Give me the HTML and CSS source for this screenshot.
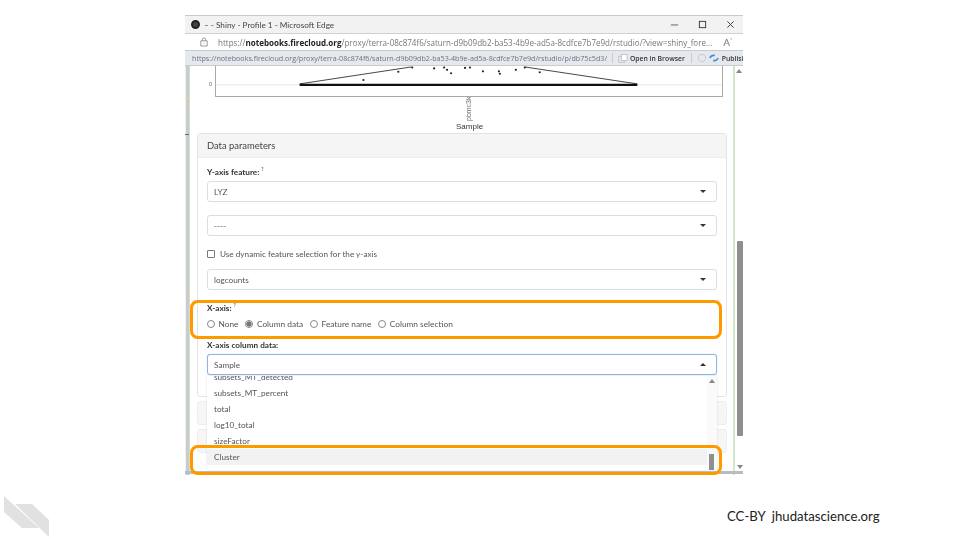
FILE: index.html
```html
<!DOCTYPE html>
<html lang="en">
<head>
<meta charset="utf-8">
<title>Shiny</title>
<link rel="stylesheet" href="styles.css">
</head>
<body>
<main class="slide">
  <section class="window">
    <div class="window-blur">
      <header class="titlebar">
        <span class="favicon"></span>
        <span class="title">– - Shiny - Profile 1 - Microsoft Edge</span>
        <span class="controls">
          <svg class="ctl" viewBox="0 0 10 10"><path d="M1 5.5H9" stroke="#555" stroke-width="1"/></svg>
          <svg class="ctl" viewBox="0 0 10 10"><rect x="1.5" y="1.5" width="7" height="7" fill="none" stroke="#333" stroke-width="1"/></svg>
          <svg class="ctl" viewBox="0 0 10 10"><path d="M1.5 1.5L8.5 8.5M8.5 1.5L1.5 8.5" stroke="#333" stroke-width="1"/></svg>
        </span>
      </header>
      <div class="addressbar">
        <svg class="lock" viewBox="0 0 10 12"><path d="M1 4.5H9V11H1ZM3 4.5V2.5Q3 1 5 1T7 2.5V4.5M5 7V8" fill="none" stroke="#777" stroke-width="0.9"/></svg>
        <span class="url">https://<b>notebooks.firecloud.org</b>/proxy/terra-08c874f6/saturn-d9b09db2-ba53-4b9e-ad5a-8cdfce7b7e9d/rstudio/?view=shiny_fore...</span>
        <span class="read">A<sup>ᐠ</sup></span>
      </div>
      <div class="toolbar">
        <span class="toolbar-url">https://notebooks.firecloud.org/proxy/terra-08c874f6/saturn-d9b09db2-ba53-4b9e-ad5a-8cdfce7b7e9d/rstudio/p/db75c5d3/</span>
        <span class="sep"></span>
        <svg class="tool-icon" viewBox="0 0 12 12"><rect x="1" y="4" width="7" height="7" fill="#eee" stroke="#bbb"/><rect x="4" y="2" width="7" height="7" fill="#fff" stroke="#bbb"/></svg>
        <span class="tool-text">Open in Browser</span>
        <span class="sep"></span>
        <svg class="tool-icon" viewBox="0 0 12 12"><circle cx="6" cy="6" r="4.5" fill="none" stroke="#ccc" stroke-width="1.2"/></svg>
        <svg class="tool-icon" viewBox="0 0 12 12"><path d="M1 6Q3 2 7 3M11 6Q9 10 5 9" fill="none" stroke="#3d8ed0" stroke-width="2"/></svg>
        <span class="tool-text publish">Publish</span>
      </div>
      <div class="content">
        <div class="gutter-left"><i class="tick-yellow"></i><i class="tick-blue"></i></div>
        <div class="page">
          <div class="plot">
            <div class="plot-frame">
              <span class="tick">0</span>
              <svg class="plot-svg" viewBox="0 0 508 31" preserveAspectRatio="none">
                <path d="M0 19.5H508" stroke="#e6e6e6" stroke-width="1"/>
                <path d="M84 18.5L196 1" fill="none" stroke="#444" stroke-width="1"/>
                <path d="M310 1L423 18.5" fill="none" stroke="#444" stroke-width="1"/>
                <path d="M84 19.5H423" stroke="#111" stroke-width="2.5"/>
                <g fill="#222">
                  <circle cx="148" cy="14.500" r="1.100"/><circle cx="183" cy="6" r="1.100"/><circle cx="197" cy="1.500" r="1.100"/>
                  <circle cx="219" cy="2.500" r="1.100"/><circle cx="229" cy="1.500" r="1.100"/><circle cx="232" cy="4" r="1.100"/>
                  <circle cx="236" cy="7.500" r="1.100"/><circle cx="250" cy="2" r="1.100"/><circle cx="255" cy="1.500" r="1.100"/>
                  <circle cx="268" cy="5.500" r="1.100"/><circle cx="285" cy="8" r="1.100"/><circle cx="284" cy="5.500" r="1.100"/>
                  <circle cx="301" cy="4" r="1.100"/><circle cx="310" cy="1.500" r="1.100"/><circle cx="325" cy="6.500" r="1.100"/>
                </g>
              </svg>
            </div>
            <span class="plot-cat">pbmc3k</span>
            <span class="plot-axis">Sample</span>
          </div>
          <div class="card">
            <h3 class="card-head">Data parameters</h3>
            <div class="card-body">
              <label class="field-label first">Y-axis feature: <sup>?</sup></label>
              <div class="select"><span>LYZ</span><i class="caret"></i></div>
              <div class="select gap-a"><span>----</span><i class="caret"></i></div>
              <div class="check-row"><span class="checkbox"></span><span>Use dynamic feature selection for the y-axis</span></div>
              <div class="select"><span>logcounts</span><i class="caret"></i></div>
              <label class="field-label xaxis">X-axis: <sup>?</sup></label>
              <div class="radio-row">
                <span class="radio-item"><span class="radio"></span>None</span>
                <span class="radio-item"><span class="radio on"></span>Column data</span>
                <span class="radio-item"><span class="radio"></span>Feature name</span>
                <span class="radio-item"><span class="radio"></span>Column selection</span>
              </div>
              <label class="field-label xcol">X-axis column data:</label>
              <div class="select focus"><span>Sample</span><i class="caret up"></i></div>
            </div>
          </div>
          <div class="collapsed"></div>
          <div class="collapsed"></div>
          <div class="dropdown">
            <ul class="options">
              <li class="opt clipped">subsets_MT_detected</li>
              <li class="opt">subsets_MT_percent</li>
              <li class="opt">total</li>
              <li class="opt">log10_total</li>
              <li class="opt">sizeFactor</li>
              <li class="opt active">Cluster</li>
              <li class="opt">label_cluster</li>
            </ul>
            <div class="drop-scroll"><i class="arrow-up"></i><i class="drop-thumb"></i></div>
          </div>
        </div>
        <div class="gutter-right"></div>
        <div class="scrollbar"><i class="arrow-up"></i><i class="thumb"></i><i class="arrow-down"></i></div>
      </div>
      <div class="bottom-edge"></div>
    </div>
  </section>
  <div class="mark mark-a"></div>
  <div class="mark mark-b"></div>
  <svg class="logo" viewBox="0 0 50 42" aria-hidden="true">
    <path d="M0 0L35 32H18L0 16Z" fill="#e1e1e1"/>
    <path d="M11 8H28L45 24V41Z" fill="#e1e1e1"/>
  </svg>
  <footer class="credit"><span>CC-BY</span><span>jhudatascience.org</span></footer>
</main>
</body>
</html>
```
FILE: styles.css
```css
* { box-sizing: border-box; }
html, body { margin: 0; padding: 0; background: #fff; }
.slide { position: relative; width: 960px; height: 540px; overflow: hidden; background: #fff; font-family: Lato, "Open Sans", sans-serif; }

.window { position: absolute; left: 185px; top: 15px; width: 558px; height: 460px; overflow: hidden; }
.window-blur { position: relative; width: 558px; height: 460px; display: flex; flex-direction: column; filter: blur(0.55px); background: #fff; border-top: 1px solid #c9c9c9; }

.titlebar { height: 17px; flex: none; display: flex; align-items: center; background: #f2f2f2; padding-left: 6px; }
.favicon { width: 9px; height: 9px; border-radius: 50%; background: #444; border: 2px solid #222; flex: none; }
.title { margin-left: 4px; font-size: 8.2px; color: #444; white-space: nowrap; }
.controls { margin-left: auto; display: flex; gap: 19px; padding-right: 8px; }
.ctl { width: 9px; height: 9px; flex: none; }

.addressbar { height: 17px; flex: none; display: flex; align-items: center; background: #fff; border-top: 1px solid #d0d0d0; padding-left: 15px; overflow: hidden; }
.lock { width: 8px; height: 10px; flex: none; }
.url { margin-left: 10px; font-family: "Open Sans", sans-serif; font-size: 8.04px; color: #777; white-space: nowrap; }
.url b { color: #222; font-weight: 700; }
.read { margin-left: auto; padding-right: 10px; font-size: 10px; color: #777; white-space: nowrap; }
.read sup { font-size: 6px; }

.toolbar { height: 16px; flex: none; display: flex; align-items: center; background: #e5e8ec; border-top: 1px solid #c8ccd2; border-bottom: 1px solid #c8ccd2; padding-left: 7px; overflow: hidden; white-space: nowrap; }
.toolbar-url { font-family: "Open Sans", sans-serif; font-size: 7.17px; color: #6b7480; flex: none; }
.sep { width: 1px; height: 10px; background: #c8ccd2; margin: 0 5px; flex: none; }
.tool-icon { width: 10px; height: 10px; flex: none; margin-right: 2px; }
.tool-text { font-family: "Open Sans", sans-serif; font-size: 6.8px; color: #333; font-weight: 600; margin-right: 1px; flex: none; }
.publish { margin-left: 1px; }

.content { position: relative; flex: 1; min-height: 0; display: flex; background: #fff; }
.gutter-left { position: relative; width: 5px; flex: none; background: #c9cbcf; border-left: 1px solid #f2f2f2; border-right: 1px solid #cfe3c0; }
.tick-yellow { position: absolute; left: -1px; top: 32px; width: 4px; height: 1px; background: #e8dc8c; }
.tick-blue { position: absolute; left: -1px; top: 68px; width: 4px; height: 1px; background: #3b6fb0; }
.page { flex: none; width: 543px; position: relative; overflow: hidden; }
.gutter-right { width: 2px; flex: none; background: #d3e4c8; }
.scrollbar { position: relative; flex: 1; display: flex; flex-direction: column; align-items: center; background: #fff; padding-top: 3px; }
.thumb { position: absolute; left: 2px; top: 175px; width: 6px; height: 195px; background: #8f8f8f; border-radius: 1px; }
.arrow-up { display: block; width: 0; height: 0; border-left: 3px solid transparent; border-right: 3px solid transparent; border-bottom: 4px solid #888; }
.arrow-down { position: absolute; left: 2px; bottom: 6px; width: 0; height: 0; border-left: 3px solid transparent; border-right: 3px solid transparent; border-top: 4px solid #888; }

.plot { height: 67px; position: relative; }
.plot-frame { position: absolute; left: 25px; top: 0; width: 508px; height: 31px; border: 1px solid #aaa; border-top: 0; }
.plot-svg { display: block; width: 100%; height: 100%; }
.tick { position: absolute; left: -7px; top: 15px; font-size: 5.5px; color: #666; font-family: "Liberation Sans", sans-serif; }
.plot-cat { position: absolute; left: 275px; top: 55px; font-size: 7px; color: #666; font-family: "Liberation Sans", sans-serif; transform: rotate(-90deg); transform-origin: left top; }
.plot-axis { position: absolute; left: 266px; top: 56px; font-size: 8px; color: #333; font-family: "Liberation Sans", sans-serif; }

.card { margin: 0 0 0 7px; width: 530px; height: 264px; border: 1px solid #e4e4e4; border-radius: 3px; background: #fff; }
.card-head { margin: 0; height: 24px; display: flex; align-items: center; padding-left: 9px; background: #f5f5f5; border-bottom: 1px solid #eee; font-size: 9.4px; font-weight: 400; color: #444; }
.card-body { padding: 0 9px; display: flex; flex-direction: column; }
.field-label { font-size: 8.2px; font-weight: 700; color: #333; height: 12px; line-height: 12px; display: block; }
.field-label sup { font-size: 5px; font-weight: 400; }
.field-label.first { margin-top: 5px; margin-bottom: 6px; }
.field-label.xaxis { margin-top: 9px; }
.field-label.xcol { margin-top: 9px; margin-bottom: 3px; }
.select { height: 21px; width: 510px; flex: none; border: 1px solid #ddd; border-radius: 3px; display: flex; align-items: center; padding: 0 10px 0 6px; font-size: 8.2px; color: #555; background: #fff; }
.select.gap-a { margin-top: 13px; }
.select.focus { border-color: #8ab6e0; box-shadow: 0 0 1px #a8cbec; }
.caret { margin-left: auto; width: 0; height: 0; border-left: 3px solid transparent; border-right: 3px solid transparent; border-top: 3px solid #333; }
.caret.up { border-top: 0; border-bottom: 3px solid #333; }
.check-row { height: 12px; margin: 12px 0 9px; display: flex; align-items: center; gap: 5px; font-size: 8.2px; color: #555; }
.checkbox { width: 8px; height: 8px; border: 1px solid #777; border-radius: 1px; background: #fff; }
.radio-row { display: flex; gap: 7px; height: 12px; margin-top: 7px; align-items: center; font-size: 8.3px; color: #555; }
.radio-item { display: flex; align-items: center; gap: 3.5px; }
.radio { width: 8px; height: 8px; border: 1px solid #888; border-radius: 50%; background: #fff; }
.radio.on { background: radial-gradient(circle, #777 0 2.4px, #fff 2.8px); }

.collapsed { margin: 4px 0 0 7px; width: 530px; height: 24px; border: 1px solid #eee; border-radius: 3px; background: #f6f6f6; }

.dropdown { position: absolute; left: 17px; top: 310px; width: 510px; height: 94px; background: #fff; display: flex; box-shadow: 0 0 2px rgba(0,0,0,.12); overflow: hidden; }
.options { list-style: none; margin: -7px 0 0; padding: 0; flex: 1; min-width: 0; }
.opt { height: 16px; line-height: 16px; padding-left: 7px; font-size: 8.2px; color: #555; }
.opt.active { background: #f2f2f2; }
.drop-scroll { position: relative; width: 10px; flex: none; background: #fafafa; display: flex; justify-content: center; padding-top: 3px; }
.drop-thumb { position: absolute; left: 2px; top: 78px; width: 5px; height: 16px; background: #8f8f8f; }

.bottom-edge { position: absolute; left: 0; bottom: 1px; width: 558px; height: 3px; background: #b9bcc2; }

.mark { position: absolute; left: 190px; width: 532px; border: 3px solid #ff9900; border-radius: 8px; box-shadow: 0 0 0.6px #ff9900; }
.mark-a { top: 300px; height: 39px; }
.mark-b { top: 445px; height: 30px; }

.logo { position: absolute; left: 4px; top: 496px; width: 50px; height: 42px; }
.credit { position: absolute; left: 727px; top: 507px; display: flex; gap: 6px; font-size: 13.2px; line-height: 18px; color: #222; white-space: nowrap; }
```
